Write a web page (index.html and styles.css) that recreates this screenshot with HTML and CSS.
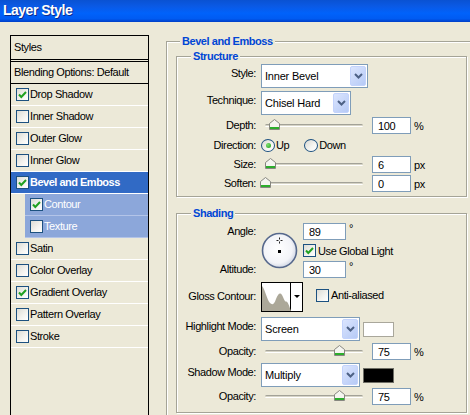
FILE: index.html
```html
<!DOCTYPE html>
<html lang="en">
<head>
    <meta charset="UTF-8">
    <title>Layer Style</title>
    <link rel="stylesheet" href="styles.css">
</head>
<body>
    <div class="titlebar">Layer Style</div>
    <div class="main">
        <div class="styles-panel">
            <div class="panel-head">Styles</div>
            <div class="panel-blend">Blending Options: Default</div>
            <ul class="effect-list">
                <li class="effect"><span class="check"><svg width="11" height="11" viewBox="0 0 11 11"><path d="M2 5.5l2.3 2.5L9 3" fill="none" stroke="#21a121" stroke-width="2"/></svg></span>Drop Shadow</li>
                <li class="effect"><span class="check"></span>Inner Shadow</li>
                <li class="effect"><span class="check"></span>Outer Glow</li>
                <li class="effect"><span class="check"></span>Inner Glow</li>
                <li class="effect selected"><span class="check"><svg width="11" height="11" viewBox="0 0 11 11"><path d="M2 5.5l2.3 2.5L9 3" fill="none" stroke="#21a121" stroke-width="2"/></svg></span>Bevel and Emboss</li>
                <li class="effect sub"><span class="check"><svg width="11" height="11" viewBox="0 0 11 11"><path d="M2 5.5l2.3 2.5L9 3" fill="none" stroke="#21a121" stroke-width="2"/></svg></span>Contour</li>
                <li class="effect sub"><span class="check"></span>Texture</li>
                <li class="effect"><span class="check"></span>Satin</li>
                <li class="effect"><span class="check"></span>Color Overlay</li>
                <li class="effect"><span class="check"><svg width="11" height="11" viewBox="0 0 11 11"><path d="M2 5.5l2.3 2.5L9 3" fill="none" stroke="#21a121" stroke-width="2"/></svg></span>Gradient Overlay</li>
                <li class="effect"><span class="check"></span>Pattern Overlay</li>
                <li class="effect"><span class="check"></span>Stroke</li>
            </ul>
        </div>

        <div class="options">
            <fieldset class="group outer">
                <legend>Bevel and Emboss</legend>

                <fieldset class="group inner structure">
                    <legend>Structure</legend>
                    <div class="row row-select">
                        <span class="label">Style:</span>
                        <div class="select w-style"><span class="select-text">Inner Bevel</span><span class="select-btn"><svg width="9" height="6" viewBox="0 0 9 6"><path d="M1 1l3.5 3.5L8 1" fill="none" stroke="#4d6185" stroke-width="2"/></svg></span></div>
                    </div>
                    <div class="row row-select gap3">
                        <span class="label">Technique:</span>
                        <div class="select w-tech"><span class="select-text">Chisel Hard</span><span class="select-btn"><svg width="9" height="6" viewBox="0 0 9 6"><path d="M1 1l3.5 3.5L8 1" fill="none" stroke="#4d6185" stroke-width="2"/></svg></span></div>
                    </div>
                    <div class="row gap2">
                        <span class="label">Depth:</span>
                        <div class="controls">
                            <div class="slider"><span class="thumb" style="left: 9px"><svg width="11" height="11" viewBox="0 0 11 11"><path d="M0.5 10.5V4.5L5.5 0.5L10.5 4.5V10.5Z" fill="#f5f5f0" stroke="#878780"/><rect x="1" y="8" width="9" height="2" fill="#2cad2c"/></svg></span></div>
                            <input class="num" type="text" value="100"><span class="unit">%</span>
                        </div>
                    </div>
                    <div class="row row-radio gap1">
                        <span class="label">Direction:</span>
                        <div class="radio-group">
                            <label class="option"><span class="radio on"></span>Up</label>
                            <label class="option"><span class="radio"></span>Down</label>
                        </div>
                    </div>
                    <div class="row gap1">
                        <span class="label">Size:</span>
                        <div class="controls">
                            <div class="slider"><span class="thumb" style="left: 5px"><svg width="11" height="11" viewBox="0 0 11 11"><path d="M0.5 10.5V4.5L5.5 0.5L10.5 4.5V10.5Z" fill="#f5f5f0" stroke="#878780"/><rect x="1" y="8" width="9" height="2" fill="#2cad2c"/></svg></span></div>
                            <input class="num" type="text" value="6"><span class="unit">px</span>
                        </div>
                    </div>
                    <div class="row gap2">
                        <span class="label">Soften:</span>
                        <div class="controls">
                            <div class="slider"><span class="thumb" style="left: 0px"><svg width="11" height="11" viewBox="0 0 11 11"><path d="M0.5 10.5V4.5L5.5 0.5L10.5 4.5V10.5Z" fill="#f5f5f0" stroke="#878780"/><rect x="1" y="8" width="9" height="2" fill="#2cad2c"/></svg></span></div>
                            <input class="num" type="text" value="0"><span class="unit">px</span>
                        </div>
                    </div>
                </fieldset>

                <fieldset class="group inner shading">
                    <legend>Shading</legend>
                    <div class="angle-block">
                        <span class="label angle-label">Angle:</span>
                        <div class="dial">
                            <svg width="37" height="37" viewBox="0 0 37 37">
                                <defs>
                                    <radialGradient id="dialFill" cx="45%" cy="45%" r="60%">
                                        <stop offset="0" stop-color="#ffffff"/>
                                        <stop offset="0.7" stop-color="#f3f4f8"/>
                                        <stop offset="1" stop-color="#c9d0e0"/>
                                    </radialGradient>
                                </defs>
                                <circle cx="18.5" cy="18.5" r="17" fill="url(#dialFill)" stroke="#56688c" stroke-width="1.6"/>
                                <path d="M18.5 5.5v2M18.5 9.5v2M15.5 8.5h2M19.5 8.5h2" stroke="#222" stroke-width="1"/>
                                <rect x="17" y="18" width="3" height="3" fill="#000"/>
                            </svg>
                        </div>
                        <div class="cell angle-input"><input class="num wide" type="text" value="89"><span class="deg">°</span></div>
                        <label class="cell global-light"><span class="check"><svg width="11" height="11" viewBox="0 0 11 11"><path d="M2 5.5l2.3 2.5L9 3" fill="none" stroke="#21a121" stroke-width="2"/></svg></span>Use Global Light</label>
                        <span class="label altitude-label">Altitude:</span>
                        <div class="cell altitude-input"><input class="num wide" type="text" value="30"><span class="deg">°</span></div>
                    </div>
                    <div class="row row-gloss gap3">
                        <span class="label">Gloss Contour:</span>
                        <div class="controls">
                            <div class="contour-box">
                                <div class="contour-preview">
                                    <svg width="29" height="28" viewBox="0 0 29 28">
                                        <path d="M0 3C3 6 5 17 8 20C10 22 12 22 14 16C16 11 18 9 20 12C22 16 23 19 24 18.5C25.5 18 27 22 29 28H0Z" fill="#aca899"/>
                                    </svg>
                                </div>
                                <div class="contour-arrow"><span class="tri"></span></div>
                            </div>
                            <label class="anti"><span class="check"></span>Anti-aliased</label>
                        </div>
                    </div>
                    <div class="row row-select gap5">
                        <span class="label">Highlight Mode:</span>
                        <div class="controls">
                            <div class="select w-mode"><span class="select-text">Screen</span><span class="select-btn"><svg width="9" height="6" viewBox="0 0 9 6"><path d="M1 1l3.5 3.5L8 1" fill="none" stroke="#4d6185" stroke-width="2"/></svg></span></div>
                            <span class="swatch light"></span>
                        </div>
                    </div>
                    <div class="row gap2">
                        <span class="label">Opacity:</span>
                        <div class="controls">
                            <div class="slider"><span class="thumb" style="left: 74px"><svg width="11" height="11" viewBox="0 0 11 11"><path d="M0.5 10.5V4.5L5.5 0.5L10.5 4.5V10.5Z" fill="#f5f5f0" stroke="#878780"/><rect x="1" y="8" width="9" height="2" fill="#2cad2c"/></svg></span></div>
                            <input class="num" type="text" value="75"><span class="unit">%</span>
                        </div>
                    </div>
                    <div class="row row-select gap3">
                        <span class="label">Shadow Mode:</span>
                        <div class="controls">
                            <div class="select w-mode"><span class="select-text">Multiply</span><span class="select-btn"><svg width="9" height="6" viewBox="0 0 9 6"><path d="M1 1l3.5 3.5L8 1" fill="none" stroke="#4d6185" stroke-width="2"/></svg></span></div>
                            <span class="swatch dark"></span>
                        </div>
                    </div>
                    <div class="row gap1">
                        <span class="label">Opacity:</span>
                        <div class="controls">
                            <div class="slider"><span class="thumb" style="left: 74px"><svg width="11" height="11" viewBox="0 0 11 11"><path d="M0.5 10.5V4.5L5.5 0.5L10.5 4.5V10.5Z" fill="#f5f5f0" stroke="#878780"/><rect x="1" y="8" width="9" height="2" fill="#2cad2c"/></svg></span></div>
                            <input class="num" type="text" value="75"><span class="unit">%</span>
                        </div>
                    </div>
                </fieldset>
            </fieldset>
        </div>
    </div>
</body>
</html>
```

FILE: styles.css
```css
* {
    box-sizing: border-box;
}
body {
    margin: 0;
    width: 470px;
    height: 415px;
    overflow: hidden;
    background: #ece9d8;
    font-family: "Liberation Sans", Arial, sans-serif;
    font-size: 11px;
    letter-spacing: -0.4px;
    color: #000;
}
.titlebar {
    height: 22px;
    line-height: 20px;
    padding-left: 3px;
    background: linear-gradient(#0a52d2 0%, #0a5ae6 30%, #0062fb 60%, #005bf2 85%, #003fc6 100%);
    color: #fff;
    font-size: 14px;
    font-weight: bold;
    letter-spacing: -0.5px;
    text-shadow: 1px 1px 0 #0b2c8c;
}
.main {
    display: flex;
    align-items: flex-start;
    padding: 13px 0 0 10px;
}

/* left list of effects */
.styles-panel {
    flex-shrink: 0;
    width: 139px;
    height: 392px;
    border: 1px solid #000;
}
.panel-head {
    height: 26px;
    line-height: 22px;
    padding-left: 3px;
    border-bottom: 3px double #000;
}
.panel-blend {
    height: 22px;
    line-height: 20px;
    padding-left: 3px;
    border-bottom: 1px solid #000;
}
.effect-list {
    list-style: none;
    margin: 0;
    padding: 0;
}
.effect {
    display: flex;
    align-items: center;
    height: 22px;
    padding-left: 5px;
    padding-bottom: 1px;
    border-bottom: 1px solid #fff;
}
.effect .check {
    margin-right: 1px;
}
.effect.selected {
    background: #316ac5;
    color: #fff;
    font-weight: bold;
    letter-spacing: -0.5px;
}
.effect.sub {
    margin-left: 14px;
    background: #8ca7da;
    color: #fff;
    border-bottom-color: #b3c4e8;
}

.check {
    display: inline-flex;
    align-items: center;
    justify-content: center;
    flex-shrink: 0;
    width: 13px;
    height: 13px;
    border: 1px solid #1c5180;
    background: linear-gradient(135deg, #dcdcd5, #f4f4f0 60%, #fff);
}

/* right options */
.options {
    flex-shrink: 0;
    margin-left: 17px;
}
.group {
    margin: 0;
    border: 1px solid #a5a497;
    box-shadow: inset 1px 1px 0 #fff, 1px 1px 0 #fff;
}
.group > legend {
    padding: 0 2px;
    line-height: 12px;
    font-weight: bold;
    color: #0046d5;
    letter-spacing: -0.45px;
    background: #ece9d8;
}
.outer {
    width: 320px;
    height: 400px;
    padding: 3px 0 0 9px;
}
.outer > legend {
    margin-left: 4px;
}
.inner {
    width: 291px;
    padding: 2px 0 4px 0;
}
.inner > legend {
    margin-left: 14px;
}
.shading {
    margin-top: 10px;
    padding: 4px 0 7px 0;
}

.row {
    display: grid;
    grid-template-columns: 84px auto;
    align-items: center;
    height: 17px;
}
.row-select {
    align-items: start;
    height: 24px;
}
.row-select .label {
    padding-top: 3px;
}
.row-radio {
    height: 20px;
}
.row-gloss {
    height: 31px;
}
.gap1 { margin-top: 1px; }
.gap2 { margin-top: 2px; }
.gap3 { margin-top: 3px; }
.gap5 { margin-top: 5px; }

.label {
    text-align: right;
    padding-right: 5px;
    line-height: 13px;
    white-space: nowrap;
}
.controls {
    display: flex;
    align-items: center;
}

/* XP combo box */
.select {
    display: flex;
    align-items: center;
    height: 24px;
    padding-left: 3px;
    border: 1px solid #7f9db9;
    background: #fff;
    letter-spacing: -0.2px;
}
.select-text {
    flex: 1;
}
.select-btn {
    display: flex;
    align-items: center;
    justify-content: center;
    width: 16px;
    height: 20px;
    margin-right: 1px;
    border: 1px solid #c3d3fc;
    border-radius: 2px;
    background: linear-gradient(135deg, #dbe5fe, #b6caf6);
}
.w-style { width: 107px; }
.w-tech { width: 90px; }
.w-mode { width: 99px; }

.swatch {
    width: 31px;
    height: 15px;
    margin-left: 3px;
}
.swatch.light {
    background: #fff;
    border: 1px solid #a9a79b;
}
.swatch.dark {
    background: #000;
    border: 1px solid #6e6e66;
}

/* slider */
.slider {
    position: relative;
    width: 98px;
    height: 17px;
    margin: 0 9px 0 4px;
}
.slider::before {
    content: "";
    position: absolute;
    left: 0;
    right: 0;
    top: 7px;
    height: 3px;
    border-radius: 2px;
    background: linear-gradient(#a3a298 0 1px, #d6d4c6 1px 2px, #fff 2px);
}
.thumb {
    position: absolute;
    top: 2px;
    width: 11px;
    height: 11px;
    margin-left: -5px;
    line-height: 0;
}

.num {
    width: 39px;
    height: 17px;
    margin: 0;
    padding: 0 0 0 5px;
    border: 1px solid #7f9db9;
    background: #fff;
    font: inherit;
    letter-spacing: inherit;
    color: #000;
    outline: none;
}
.num.wide {
    width: 43px;
}
.unit {
    margin-left: 3px;
}

/* radio buttons */
.radio-group {
    display: flex;
    align-items: center;
    gap: 15px;
}
.option {
    display: flex;
    align-items: center;
}
.radio {
    display: inline-flex;
    align-items: center;
    justify-content: center;
    width: 14px;
    height: 13px;
    margin-right: 1px;
    border: 1px solid #1c5180;
    border-radius: 50%;
    background: linear-gradient(135deg, #d8d8d2, #f6f6f2 60%, #fff);
}
.radio.on::after {
    content: "";
    width: 5px;
    height: 5px;
    border-radius: 50%;
    background: radial-gradient(circle at 35% 35%, #7ee06e, #1e9d1e);
}

/* angle + altitude */
.angle-block {
    display: grid;
    grid-template-columns: 84px 42px auto;
    grid-template-rows: 17px 15px 17px;
    row-gap: 3px;
    align-items: center;
}
.angle-label {
    grid-column: 1;
    grid-row: 1;
}
.altitude-label {
    grid-column: 1;
    grid-row: 3;
}
.dial {
    grid-column: 2;
    grid-row: 1 / 4;
    line-height: 0;
}
.cell {
    grid-column: 3;
    display: flex;
    align-items: flex-start;
}
.angle-input { grid-row: 1; }
.global-light {
    grid-row: 2;
    align-items: center;
}
.global-light .check {
    margin-right: 2px;
}
.altitude-input { grid-row: 3; }
.deg {
    margin-left: 3px;
    line-height: 10px;
}

/* gloss contour */
.contour-box {
    display: flex;
    width: 42px;
    height: 30px;
    border: 1px solid #000;
    background: #fff;
}
.contour-preview {
    width: 29px;
    padding-top: 0;
    border-right: 1px solid #000;
    line-height: 0;
}
.contour-arrow {
    flex: 1;
    display: flex;
    align-items: center;
    justify-content: center;
}
.tri {
    width: 0;
    height: 0;
    border-left: 3px solid transparent;
    border-right: 3px solid transparent;
    border-top: 3px solid #000;
}
.anti {
    display: flex;
    align-items: center;
    margin-left: 13px;
    margin-top: -3px;
}
.anti .check {
    margin-right: 2px;
}
```
